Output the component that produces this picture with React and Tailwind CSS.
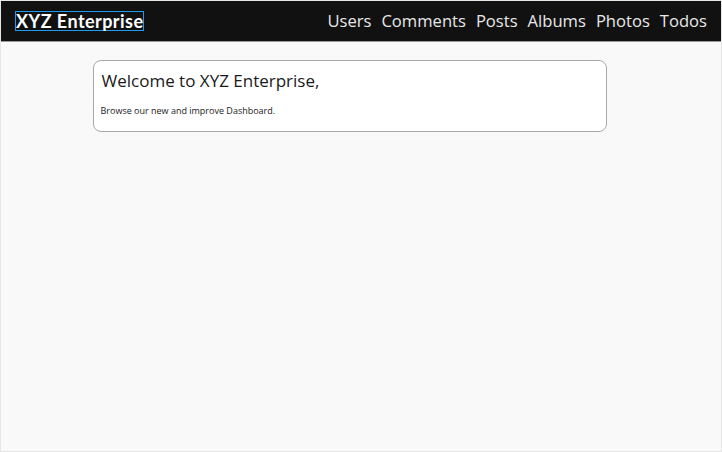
export default function App() {
  const links = ['Users', 'Comments', 'Posts', 'Albums', 'Photos', 'Todos']
  return (
    <div className="h-[452px] w-[722px] border border-[#e6e6e6] bg-[#f9f9f9] font-['Open_Sans',sans-serif] overflow-hidden">
      {/* Top bar */}
      <header className="flex h-[41px] items-center justify-between border-b border-[#9a9a9a] bg-[#111111] pl-[14px] pr-[14px]">
        <a className="border border-[#1e9bf0] pt-[1px] text-[18px] font-bold leading-[17px] text-white font-['Lato',sans-serif] tracking-[0.45px]">
          XYZ Enterprise
        </a>
        <nav className="flex items-center gap-[10px] pt-[1px] text-[16.6px] text-[#e8e8e8]">
          {links.map(l => (
            <span key={l}>{l}</span>
          ))}
        </nav>
      </header>

      <main className="flex justify-center pt-[18px] pr-[23px]">
        <div className="h-[72px] w-[514px] rounded-[8px] border border-[#a8a8a8] bg-white pl-[7px] pt-[8px]">
          <h1 className="pl-[1px] text-[17px] leading-[24px] text-[#1a1a1a]">Welcome to XYZ Enterprise,</h1>
          <p className="mt-[11px] text-[9px] text-[#222]">Browse our new and improve Dashboard.</p>
        </div>
      </main>
    </div>
  )
}
